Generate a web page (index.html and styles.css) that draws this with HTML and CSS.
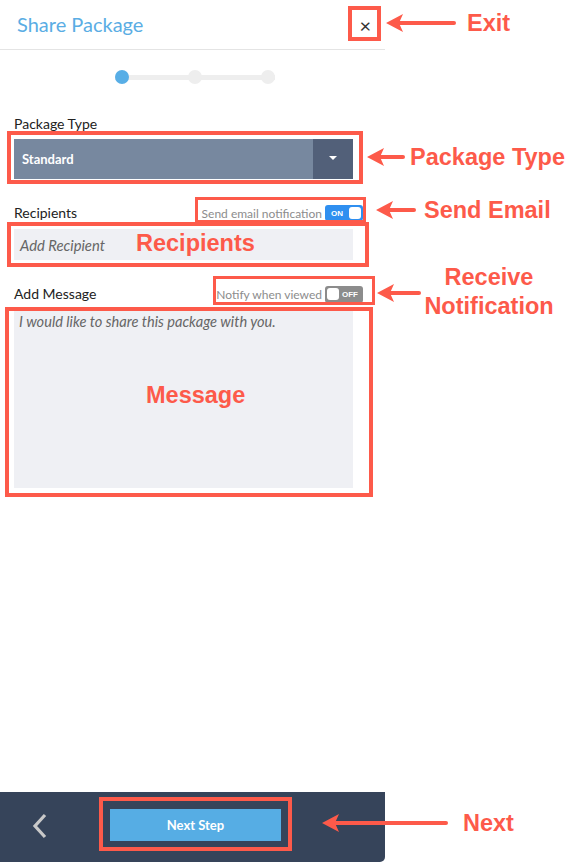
FILE: index.html
```html
<!DOCTYPE html>
<html>
<head>
<meta charset="utf-8">
<link rel="stylesheet" href="styles.css">
</head>
<body>
<div class="page">
  <div class="panel">
    <div class="header">
      <div class="title">Share Package</div>
      <div class="close">×</div>
    </div>
    <div class="steps">
      <span class="dot active"></span>
      <span class="dot"></span>
      <span class="dot"></span>
    </div>
    <div class="form">
      <div class="label first">Package Type</div>
      <div class="select">
        <div class="select-value">Standard</div>
        <div class="select-btn"><span class="caret"></span></div>
      </div>
      <div class="row">
        <div class="label">Recipients</div>
        <div class="opt">
          <span class="opt-text">Send email notification</span>
          <span class="toggle on"><span class="t-label">ON</span><span class="knob"></span></span>
        </div>
      </div>
      <div class="input">Add Recipient</div>
      <div class="row">
        <div class="label">Add Message</div>
        <div class="opt">
          <span class="opt-text">Notify when viewed</span>
          <span class="toggle off"><span class="knob"></span><span class="t-label">OFF</span></span>
        </div>
      </div>
      <div class="textarea">I would like to share this package with you.</div>
    </div>
    <div class="footer">
      <svg class="back" width="20" height="28" viewBox="0 0 20 28"><polyline points="13,2 3,13 13,24" fill="none" stroke="#c9c9c9" stroke-width="3.2"/></svg>
      <div class="next-btn">Next Step</div>
    </div>
  </div>

  <div class="annot">
    <div class="rbox b-close"></div>
    <div class="rbox b-pkg"></div>
    <div class="rbox thin b-email"></div>
    <div class="rbox b-recip"></div>
    <div class="rbox thin b-notify"></div>
    <div class="rbox b-msg"></div>
    <div class="rbox b-next"></div>

    <svg class="arrows" width="585" height="862" viewBox="0 0 585 862">
      <g stroke="#fd5a4a" stroke-width="4" stroke-linecap="round" fill="#fd5a4a">
        <line x1="398" y1="23" x2="454" y2="23"/>
        <polygon stroke="none" points="386,23 403,14 399,23 403,32"/>
        <line x1="378" y1="157" x2="403" y2="157"/>
        <polygon stroke="none" points="367,157 384,148 380,157 384,166"/>
        <line x1="387" y1="210" x2="414" y2="210"/>
        <polygon stroke="none" points="376,210 393,201 389,210 393,219"/>
        <line x1="389" y1="293" x2="419" y2="293"/>
        <polygon stroke="none" points="377,293 394,284 390,293 394,302"/>
        <line x1="334" y1="823" x2="446" y2="823"/>
        <polygon stroke="none" points="322,823 339,814 335,823 339,832"/>
      </g>
    </svg>

    <div class="atext t-exit">Exit</div>
    <div class="atext t-pkg">Package Type</div>
    <div class="atext t-email">Send Email</div>
    <div class="atext t-notify">Receive<br>Notification</div>
    <div class="atext t-recip">Recipients</div>
    <div class="atext t-msg">Message</div>
    <div class="atext t-next">Next</div>
  </div>
</div>
</body>
</html>
```
FILE: styles.css
```css
* { box-sizing: border-box; }
html, body { margin: 0; padding: 0; background: #fff; }
body { font-family: Lato, "Open Sans", sans-serif; }

.page {
  position: relative;
  width: 585px;
  height: 862px;
  overflow: hidden;
}

.panel {
  width: 385px;
  height: 862px;
  display: flex;
  flex-direction: column;
  background: #fff;
}

.header {
  height: 50px;
  border-bottom: 1px solid #e4e4e4;
  display: flex;
  align-items: center;
  justify-content: space-between;
  padding: 0 14px 0 17px;
}
.title {
  font-size: 20px;
  color: #5aade4;
  line-height: 24px;
  margin-top: -2px;
}
.close {
  font-size: 20px;
  color: #333;
  line-height: 20px;
  font-weight: 400;
}

.steps {
  margin: 20px 0 0 115px;
  width: 160px;
  height: 14px;
  display: flex;
  justify-content: space-between;
  background: linear-gradient(#eeeeee, #eeeeee) center / 100% 5px no-repeat;
}
.dot {
  width: 14px;
  height: 14px;
  border-radius: 50%;
  background: #eeeeee;
}
.dot.active { background: #58aee6; }

.form {
  padding: 0 32px 0 14px;
  display: flex;
  flex-direction: column;
}
.label {
  font-size: 14px;
  line-height: 16px;
  color: #222;
}
.label.first { margin-top: 32px; }

.select {
  margin-top: 7px;
  height: 40px;
  display: flex;
  background: #77889f;
}
.select-value {
  flex: 1;
  display: flex;
  align-items: center;
  padding-left: 8px;
  color: #fff;
  font-weight: 700;
  font-size: 13px;
}
.select-btn {
  width: 40px;
  background: #526079;
  display: flex;
  align-items: center;
  justify-content: center;
}
.caret {
  width: 0;
  height: 0;
  border-left: 4px solid transparent;
  border-right: 4px solid transparent;
  border-top: 4px solid #fff;
  margin-top: -2px;
}

.row {
  margin-top: 26px;
  margin-right: -10px;
  height: 16px;
  display: flex;
  align-items: center;
  justify-content: space-between;
}
.opt {
  display: flex;
  align-items: center;
  gap: 3px;
}
.opt-text {
  font-size: 12px;
  color: #8c8c8c;
}
.toggle {
  width: 38px;
  height: 16px;
  border-radius: 3px;
  display: flex;
  align-items: center;
  justify-content: space-between;
  padding: 0 2px 0 6px;
}
.toggle.on { background: #2f8ff0; }
.toggle.off { background: #8c8c8c; padding: 0 5px 0 2px; height: 17px; }
.t-label {
  color: #fff;
  font-size: 8px;
  font-weight: 700;
  font-family: "Liberation Sans", Arial, sans-serif;
}
.knob {
  width: 12px;
  height: 12px;
  border-radius: 3px;
  background: #fff;
}

.input {
  margin-top: 8px;
  height: 31px;
  background: #eff0f4;
  display: flex;
  align-items: center;
  padding-left: 6px;
  font-size: 14.8px;
  font-style: italic;
  color: #666;
}

.textarea {
  margin-top: 8px;
  height: 178px;
  background: #eff0f4;
  padding: 3px 0 0 5px;
  font-size: 14.6px;
  line-height: 17px;
  font-style: italic;
  color: #666;
}

.footer {
  margin-top: auto;
  height: 70px;
  background: #36445a;
  border-bottom-right-radius: 5px;
  display: flex;
  align-items: center;
  padding: 0 0 4px 32px;
}
.back { display: block; margin-top: 3px; }
.next-btn {
  margin-left: 58px;
  width: 171px;
  height: 32px;
  background: #56ade4;
  color: #fff;
  font-weight: 700;
  font-size: 13px;
  display: flex;
  align-items: center;
  justify-content: center;
}

/* annotation overlay */
.annot {
  position: absolute;
  left: 0;
  top: 0;
  width: 585px;
  height: 862px;
  pointer-events: none;
}
.arrows { position: absolute; left: 0; top: 0; }
.rbox {
  position: absolute;
  border: 4px solid #fd5a4a;
}
.rbox.thin { border-width: 3px; }
.b-close { left: 348px; top: 6px; width: 33px; height: 35px; }
.b-pkg { left: 7px; top: 131px; width: 356px; height: 53px; }
.b-email { left: 195px; top: 197px; width: 171px; height: 26px; }
.b-recip { left: 7px; top: 222px; width: 362px; height: 45px; }
.b-notify { left: 213px; top: 276px; width: 162px; height: 29px; }
.b-msg { left: 5px; top: 307px; width: 368px; height: 190px; }
.b-next { left: 99px; top: 797px; width: 193px; height: 54px; }

.atext {
  position: absolute;
  font-family: "Liberation Sans", Arial, sans-serif;
  font-weight: 700;
  font-size: 23.5px;
  line-height: 28px;
  color: #fd5a4a;
  white-space: nowrap;
}
.t-exit { left: 467px; top: 9px; }
.t-pkg { left: 410px; top: 143px; }
.t-email { left: 424px; top: 196px; }
.t-notify { left: 419px; width: 140px; top: 263px; text-align: center; line-height: 29px; }
.t-recip { left: 136px; top: 229px; }
.t-msg { left: 146px; top: 381px; }
.t-next { left: 463px; top: 809px; }
```
